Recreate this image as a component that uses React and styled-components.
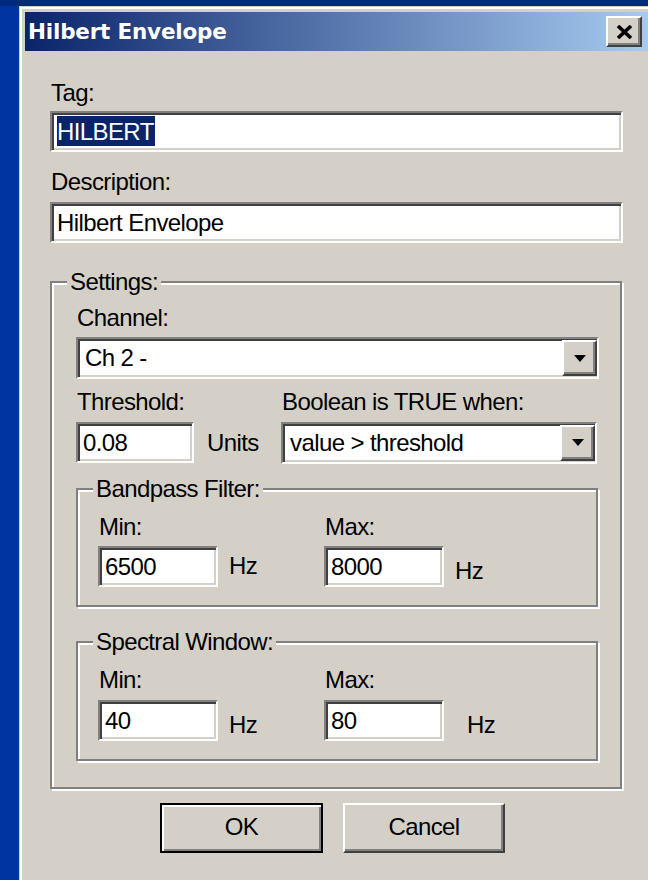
import React from "react";
import styled, { createGlobalStyle, css } from "styled-components";

const GlobalStyle = createGlobalStyle`
  html, body {
    margin: 0;
    padding: 0;
  }
  body {
    width: 648px;
    height: 880px;
    overflow: hidden;
    background: linear-gradient(#002a7e 0, #002a7e 6px, #0034a0 6px);
    font-family: "Liberation Sans", Arial, sans-serif;
    color: #000;
  }
`;

// dialog font, shared by every label, field and button
const uiText = css`
  font-family: "Liberation Sans", Arial, sans-serif;
  font-size: 24px;
  letter-spacing: -0.6px;
  white-space: nowrap;
`;

// classic 3D bevels
const raised = css`
  background: #d4d0c8;
  border: 2px solid;
  border-color: #fff #404040 #404040 #fff;
  box-shadow: inset -2px -2px 0 #808080;
`;

const sunken = css`
  background: #fff;
  border: 2px solid;
  border-color: #808080 #fff #fff #808080;
  box-shadow: inset 2px 2px 0 #404040, inset -2px -2px 0 #d4d0c8;
`;

const etched = css`
  border: 2px solid #808080;
  box-shadow: 2px 2px 0 #fff, inset 2px 2px 0 #fff;
`;

const Window = styled.div`
  margin: 6px 0 0 19px;
  width: 635px;
  height: 874px;
  box-sizing: border-box;
  padding: 6px 6px 0 6px;
  background: #d4d0c8;
  box-shadow: inset 1px 1px 0 #d4d0c8, inset 3px 3px 0 #fff;
  display: flex;
  flex-direction: column;
`;

const TitleBar = styled.div`
  height: 39px;
  flex: none;
  display: flex;
  align-items: center;
  justify-content: space-between;
  padding: 0 6px 0 3px;
  background: linear-gradient(to right, #0a246a, #a6caf0);
`;

const Title = styled.span`
  font: bold 21.5px "DejaVu Sans", Verdana, sans-serif;
  color: #fff;
  letter-spacing: -0.2px;
`;

const CloseButton = styled.button`
  ${raised};
  width: 36px;
  height: 31px;
  padding: 0;
  display: flex;
  align-items: center;
  justify-content: center;
`;

const Body = styled.div`
  display: flex;
  flex-direction: column;
  width: 573px;
  padding: 28px 0 0 25px;
`;

const Label = styled.div`
  ${uiText};
  line-height: 28px;
  padding-left: 1px;
  margin-top: ${(p) => p.$top || 0}px;
`;

const Field = styled.div`
  ${sunken};
  ${uiText};
  box-sizing: border-box;
  width: ${(p) => (p.$width ? `${p.$width}px` : "100%")};
  height: 41px;
  margin-top: ${(p) => p.$top || 0}px;
  padding: 0 5px;
  line-height: 37px;
  overflow: hidden;
`;

const Selected = styled.span`
  background: #0a246a;
  color: #fff;
  padding: 2px 1px 1px 0;
`;

const Combo = styled.div`
  ${sunken};
  ${uiText};
  box-sizing: border-box;
  width: ${(p) => (p.$width ? `${p.$width}px` : "100%")};
  height: 42px;
  margin-top: ${(p) => p.$top || 0}px;
  padding: 1px 0 1px 7px;
  display: flex;
  align-items: center;
`;

const ComboText = styled.span`
  flex: 1;
`;

const DropButton = styled.div`
  ${raised};
  box-sizing: border-box;
  width: 35px;
  height: 100%;
  display: flex;
  align-items: center;
  justify-content: center;
`;

const Group = styled.fieldset`
  ${etched};
  margin: ${(p) => p.$top || 0}px 0 0 0;
  min-inline-size: 0;
  box-sizing: border-box;
  width: ${(p) => p.$width}px;
  padding: ${(p) => p.$pad};
`;

const Legend = styled.legend`
  ${uiText};
  line-height: 28px;
  padding: 0 3px;
  margin-left: ${(p) => p.$shift}px;
  background: #d4d0c8;
`;

const ThresholdGrid = styled.div`
  display: grid;
  grid-template-columns: 118px 87px 316px;
  grid-template-rows: 28px 41px;
  row-gap: 6px;
  margin-top: 9px;
  align-items: center;
`;

const WideLabel = styled(Label)`
  grid-column: 1 / 3;
`;

const RangeGrid = styled.div`
  display: grid;
  grid-template-columns: 120px 106px 120px auto;
  grid-template-rows: 28px 42px;
  row-gap: ${(p) => p.$gap}px;
  align-items: center;
`;

const Unit = styled.span`
  ${uiText};
  line-height: 28px;
  padding-left: ${(p) => p.$dx}px;
  padding-top: ${(p) => (p.$dy || 0) * 2}px;
`;

const ButtonRow = styled.div`
  display: flex;
  justify-content: center;
  gap: 20px;
  margin-top: 14px;
  padding-right: 8px;
`;

const PushButton = styled.button`
  ${raised};
  ${uiText};
  box-sizing: border-box;
  width: ${(p) => p.$width}px;
  height: 50px;
  color: #000;
  padding: 0 0 2px;
  ${(p) =>
    p.$default &&
    css`
      border-color: #000;
      box-shadow: inset 2px 2px 0 #fff, inset -2px -2px 0 #808080;
    `}
`;

const DownArrow = () => (
  <svg width="12" height="7" viewBox="0 0 12 7">
    <polygon points="0,0 12,0 6,7" fill="#000" />
  </svg>
);

const CloseGlyph = () => (
  <svg width="17" height="14" viewBox="0 0 17 14">
    <path d="M2 1 L15 13 M15 1 L2 13" stroke="#000" strokeWidth="3.6" />
  </svg>
);

const RangeGroup = ({ title, top, gap, min, max, hz }) => (
  <Group $top={top} $width={522} $pad="10px 18px 18px 20px">
    <Legend $shift={-5}>{title}</Legend>
    <RangeGrid $gap={gap}>
      <Label>Min:</Label>
      <span />
      <Label>Max:</Label>
      <span />
      <Field $width={120}>{min}</Field>
      <Unit $dx={hz[0].dx} $dy={hz[0].dy}>Hz</Unit>
      <Field $width={120}>{max}</Field>
      <Unit $dx={hz[1].dx} $dy={hz[1].dy}>Hz</Unit>
    </RangeGrid>
  </Group>
);

export default function App() {
  return (
    <>
      <GlobalStyle />
      <Window>
        <TitleBar>
          <Title>Hilbert Envelope</Title>
          <CloseButton aria-label="Close">
            <CloseGlyph />
          </CloseButton>
        </TitleBar>

        <Body>
          <Label>Tag:</Label>
          <Field $top={4}>
            <Selected>HILBERT</Selected>
          </Field>

          <Label $top={16}>Description:</Label>
          <Field $top={6}>Hilbert Envelope</Field>

          <Group $top={25} $width={572} $pad="8px 21px 26px 24px">
            <Legend $shift={-9}>Settings:</Legend>

            <Label>Channel:</Label>
            <Combo $top={5}>
              <ComboText>Ch 2 -</ComboText>
              <DropButton>
                <DownArrow />
              </DropButton>
            </Combo>

            <ThresholdGrid>
              <WideLabel>Threshold:</WideLabel>
              <Label>Boolean is TRUE when:</Label>
              <Field $width={118}>0.08</Field>
              <Unit $dx={13}>Units</Unit>
              <Combo>
                <ComboText>value &gt; threshold</ComboText>
                <DropButton>
                  <DownArrow />
                </DropButton>
              </Combo>
            </ThresholdGrid>

            <RangeGroup
              title="Bandpass Filter:"
              top={12}
              gap={4}
              min="6500"
              max="8000"
              hz={[{ dx: 11, dy: 0 }, { dx: 11, dy: 5 }]}
            />

            <RangeGroup
              title="Spectral Window:"
              top={21}
              gap={5}
              min="40"
              max="80"
              hz={[{ dx: 11, dy: 5 }, { dx: 23, dy: 5 }]}
            />
          </Group>

          <ButtonRow>
            <PushButton $default $width={163}>OK</PushButton>
            <PushButton $width={162}>Cancel</PushButton>
          </ButtonRow>
        </Body>
      </Window>
    </>
  );
}
